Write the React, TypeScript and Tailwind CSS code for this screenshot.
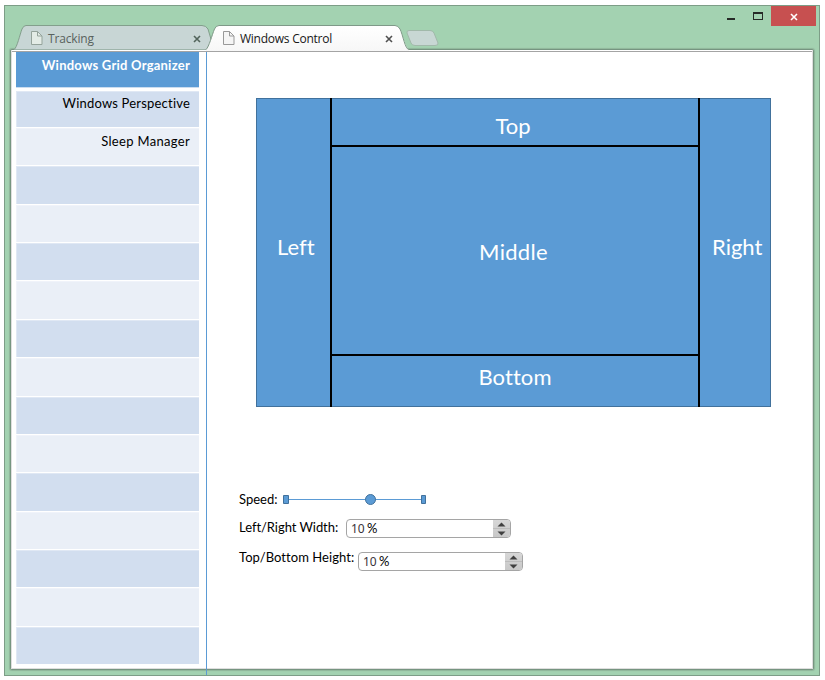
import React from "react";

const body = "font-['Lato','Liberation_Sans',sans-serif] [font-variant-ligatures:none]";
const emptyRows = Array.from({ length: 13 }, (_, i) => i);

function Page({ className }: { className: string }) {
  return (
    <svg width="12" height="14" viewBox="0 0 12 14" className={className}>
      <path d="M.5.5h6l4.5 4.5v8.500H.5z" strokeWidth="1" />
      <path d="M6.500.5v4.500H11" fill="none" strokeWidth="1" />
    </svg>
  );
}

function Close({ className }: { className: string }) {
  return (
    <svg width="8" height="8" viewBox="0 0 8 8" className={className}>
      <path d="M1 1l6 6M7 1L1 7" fill="none" strokeWidth="1.6" />
    </svg>
  );
}

function Header() {
  return (
    <header className="relative h-[43px] shrink-0">
      <svg width="814" height="48" viewBox="5 6 814 48" className="absolute left-0 top-0 z-10">
        <defs>
          <linearGradient id="active" x1="0" y1="0" x2="0" y2="1">
            <stop offset="0" stopColor="#ffffff" />
            <stop offset="1" stopColor="#f7f7f7" />
          </linearGradient>
        </defs>
        <path d="M14 49.5C17 48 20 34 22 29Q23.5 25.5 26 25.5H202Q206 25.5 208 29L214 49.5" fill="#c8d6d5" stroke="#839f8c" />
        <path d="M409 30.500H430Q433 30.500 434 33L438 43Q438.500 45.500 435 45.500H415Q412 45.500 411 43L407 33Q406.500 30.500 409 30.500Z" fill="#c8d7d4" stroke="#a1b9aa" />
        <path d="M206 50C209 47 212 35 214.500 29Q216 25.500 219 25.500H395Q398 25.500 400 29C403 35 405 47 409 49.500V51H206Z" fill="url(#active)" />
        <path d="M206 49.500C209 47 212 35 214.500 29Q216 25.500 219 25.500H395Q398 25.500 400 29C403 35 405 49.500 409 49.500" fill="none" stroke="#7f9988" />
      </svg>
      <div className="relative z-20 flex h-full items-start font-['Open_Sans','Noto_Sans',sans-serif] text-[12px] leading-[16px]">
        <div className="ml-[26px] mt-6 flex h-4 w-[170px] items-center text-[#59625e]">
          <Page className="mr-[5px] fill-[#e3ece6] stroke-[#94a39b]" />
          <span className="pt-px tracking-[-0.15px]">Tracking</span>
          <Close className="ml-auto mt-px stroke-[#52645b]" />
        </div>
        <div className="ml-[22px] mt-6 flex h-4 w-[170px] items-center text-[#171717]">
          <Page className="mr-[5px] fill-[#f5f5f5] stroke-[#999999]" />
          <span className="pt-px tracking-[-0.25px]">Windows Control</span>
          <Close className="ml-auto mt-px stroke-[#505050]" />
        </div>
        <div className="ml-auto mr-[3px] flex">
          <svg width="44" height="20" viewBox="727 6 44 20">
            <path d="M727 18h8v2h-8zM753 12h10v8h-10zM754 14v5h8v-5z" fill="#262a27" fillRule="evenodd" />
          </svg>
          <div className="flex h-5 w-[45px] items-center justify-center bg-[#c75050]">
            <Close className="mt-px stroke-white" />
          </div>
        </div>
      </div>
    </header>
  );
}

function Sidebar() {
  return (
    <aside className="relative w-[195px] shrink-0 pl-1 text-right text-[13px] leading-4 text-black">
      <div className="absolute right-0 top-0 z-20 h-[623px] w-px bg-[#5b9bd5]" />
      <nav className="flex h-[612px] w-[183px] flex-col">
        <div className="mb-[3px] h-9 shrink-0 border-b border-[#cbddf0] bg-[#5b9bd5] pr-[9px] pt-[5px] font-bold tracking-[0.23px] text-white">
          Windows Grid Organizer
        </div>
        <div className="mb-px h-9 shrink-0 border-l border-t border-[#e0e8f4] bg-[#d2deef] pr-[9px] pt-[3px] tracking-[0.2px]">Windows Perspective</div>
        <div className="grid flex-1 auto-rows-fr gap-px">
          <div className="h-full border-l border-t border-[#f0f3fa] bg-[#eaeff7] pr-[9px] pt-[4px] tracking-[0.32px]">Sleep Manager</div>
          {emptyRows.map((i) => (
            <div key={i} className={i % 2 === 0 ? "border-l border-t border-[#e0e8f4] bg-[#d2deef]" : "border-l border-t border-[#f0f3fa] bg-[#eaeff7]"} />
          ))}
        </div>
      </nav>
    </aside>
  );
}

function Grid() {
  return (
    <div className="ml-[49px] mt-[46px] grid h-[309px] w-[515px] grid-cols-[75px_366px_72px] border border-[#41719c] bg-[#5b9bd5] text-[22px] leading-6 text-white">
      <div className="-my-px border-r-2 border-black pl-[20px] pt-[137px]">Left</div>
      <div className="grid grid-rows-[48px_209px_50px] text-center">
        <div className="border-b-2 border-black pr-[4px] pt-[15px]">Top</div>
        <div className="border-b-2 border-black pr-[3px] pt-[93px] tracking-[0.3px]">Middle</div>
        <div className="pt-[9px] tracking-[0.1px]">Bottom</div>
      </div>
      <div className="-my-px border-l-2 border-black pl-[12px] pt-[137px]">Right</div>
    </div>
  );
}

function Stepper() {
  return (
    <div className="flex h-[19px] w-[165px] overflow-hidden rounded-[4px] border border-[#a5a5a5] bg-white">
      <div className="flex flex-1 items-start pl-1">
        <span className="mt-px w-[15px] font-['Noto_Sans','Open_Sans',sans-serif] text-[12px] leading-4 text-[#39343b]">10</span>
        <span className="ml-px text-[13px] leading-[17px]">%</span>
      </div>
      <div className="flex w-[17px] flex-col bg-gradient-to-b from-[#d7d7d7] to-[#c8c8c8]">
        <svg width="17" height="17" viewBox="0 0 17 17">
          <path d="M4.500 6.500L8.500 2.500L12.500 6.500ZM4.500 11.500L8.500 15.500L12.500 11.500Z" fill="#404040" />
          <path d="M0 8.500H17" stroke="#bcbcbc" />
        </svg>
      </div>
    </div>
  );
}

export default function App() {
  return (
    <div className={`h-[680px] w-[825px] overflow-hidden bg-white pl-1 pt-[5px] ${body}`}>
      <div className="flex h-[671px] w-[816px] flex-col border border-[#7d9d87] bg-[#a3d2b1]">
        <Header />
        <div className="ml-[5px] h-[621px] w-[804px] shrink-0 rounded-[2px] border border-[#769580] bg-white shadow-[0_0_1px_1px_#8fb59b]">
          <div className="flex h-[619px] flex-col border-x border-b border-[#dedede]">
            <div className="h-0.5 shrink-0 border-b border-[#a4a4a4]" />
            <div className="flex min-h-0 flex-1">
              <Sidebar />
              <main className="flex flex-1 flex-col text-[13px] leading-4 text-black">
                <Grid />
                <div className="ml-8 mt-[84px] flex h-4 items-center">
                  <span className="w-[44px]">Speed:</span>
                  <svg width="144" height="12" viewBox="0 0 144 12">
                    <path d="M4 6.500H140" stroke="#5b9bd5" />
                    <path d="M.5 2.500h5v8h-5zM138.500 2.500h4v8h-4z" fill="#5b9bd5" stroke="#41719c" />
                    <circle cx="87.500" cy="6.500" r="5" fill="#5b9bd5" stroke="#41719c" />
                  </svg>
                </div>
                <div className="ml-8 mt-[12px] flex h-[19px] items-start">
                  <span className="w-[107px] tracking-[-0.05px]">Left/Right Width:</span>
                  <Stepper />
                </div>
                <div className="ml-8 mt-[14px] flex h-[19px] items-start">
                  <span className="-mt-[3px] w-[119px] tracking-[0.05px]">Top/Bottom Height:</span>
                  <Stepper />
                </div>
              </main>
            </div>
          </div>
        </div>
      </div>
    </div>
  );
}
